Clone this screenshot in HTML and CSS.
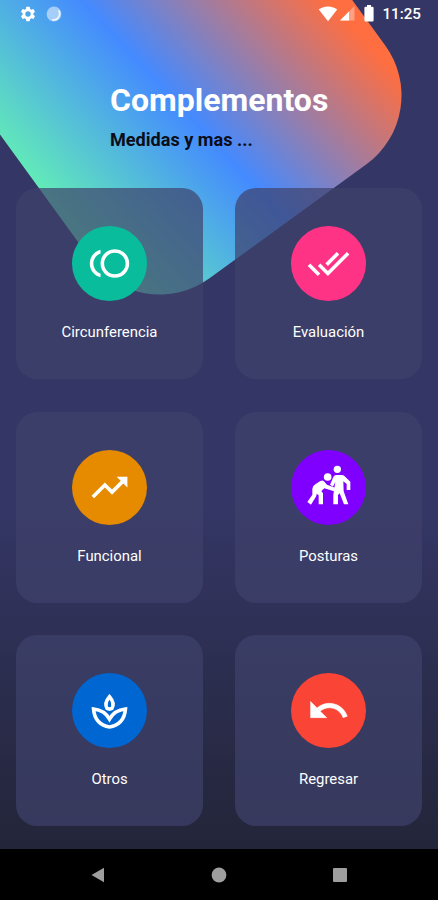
FILE: index.html
```html
<!DOCTYPE html>
<html lang="es">
<head>
	<meta charset="utf-8">
	<title>Complementos</title>
	<meta name="viewport" content="width=device-width, initial-scale=1">
	<link rel="stylesheet" href="styles.css">
</head>
<body>
	<div class="screen">
		<div class="shape"></div>

		<header class="status-bar">
			<div class="status-left">
				<svg width="18" height="18" viewBox="0 0 24 24"><path fill="#fff" d="M19.14 12.94c.04-.3.06-.61.06-.94s-.02-.64-.07-.94l2.03-1.58c.18-.14.23-.41.12-.61l-1.92-3.32c-.12-.22-.37-.29-.59-.22l-2.39.96c-.5-.38-1.03-.7-1.62-.94l-.36-2.54c-.04-.24-.24-.41-.48-.41h-3.84c-.24 0-.43.17-.47.41l-.36 2.54c-.59.24-1.13.57-1.62.94l-2.39-.96c-.22-.08-.47 0-.59.22L2.74 8.87c-.12.21-.08.47.12.61l2.03 1.58c-.05.3-.09.63-.09.94s.02.64.07.94l-2.03 1.58c-.18.14-.23.41-.12.61l1.92 3.32c.12.22.37.29.59.22l2.39-.96c.5.38 1.03.7 1.62.94l.36 2.54c.05.24.24.41.48.41h3.84c.24 0 .44-.17.47-.41l.36-2.54c.59-.24 1.13-.56 1.62-.94l2.39.96c.22.08.47 0 .59-.22l1.92-3.32c.12-.22.07-.47-.12-.61l-2.01-1.58zM12 15.6A3.6 3.6 0 1 1 12 8.4a3.6 3.6 0 0 1 0 7.2z"/></svg>
				<svg width="16" height="16" viewBox="0 0 16 16"><circle cx="8" cy="8" r="7.4" fill="#fff" opacity=".5"/><path d="M12.5 4.2A6.2 6.2 0 0 1 6.2 13.8" fill="none" stroke="#fff" stroke-width="1.5" opacity=".85"/></svg>
			</div>
			<div class="status-right">
				<svg class="wifi" width="20" height="16" viewBox="0 0 20 16"><path fill="#fff" d="M.8 3.6C6.3-.7 13.7-.7 19.2 3.6L10 15.2z"/></svg>
				<svg class="signal" width="15" height="15" viewBox="0 0 15 15"><path fill="#fff" opacity=".35" d="M0 14.5 14.5 0v14.5z"/><path fill="#fff" d="M0 14.5 9 5.5v9z"/></svg>
				<svg class="battery" width="10" height="17" viewBox="0 0 10 17"><path fill="#fff" d="M3 0h4v1.8h1.4q1.2 0 1.2 1.2v12.3q0 1.2-1.2 1.2H1.6q-1.2 0-1.2-1.2V3q0-1.2 1.2-1.2H3z"/></svg>
				<span class="clock">11:25</span>
			</div>
		</header>

		<div class="titles">
			<h1 class="title">Complementos</h1>
			<p class="subtitle">Medidas y mas ...</p>
		</div>

		<main class="cards">
			<div class="card">
				<div class="circle green">
					<svg class="icon" viewBox="0 0 24 24"><path d="M15 4c-4.42 0-8 3.58-8 8s3.58 8 8 8 8-3.58 8-8-3.58-8-8-8zm0 14c-3.31 0-6-2.69-6-6s2.69-6 6-6 6 2.69 6 6-2.69 6-6 6zM3 12c0-2.61 1.67-4.83 4-5.65V4.26C3.55 5.15 1 8.27 1 12s2.55 6.85 6 7.74v-2.09c-2.33-.82-4-3.04-4-5.65z"/></svg>
				</div>
				<span class="label">Circunferencia</span>
			</div>
			<div class="card">
				<div class="circle pink">
					<svg class="icon" viewBox="0 0 24 24"><path d="M18 7l-1.41-1.41-6.34 6.34 1.41 1.41L18 7zm4.24-1.41L11.66 16.17 7.48 12l-1.41 1.41L11.66 19l12-12-1.42-1.41zM.41 13.41L6 19l1.41-1.41L1.83 12 .41 13.41z"/></svg>
				</div>
				<span class="label">Evaluación</span>
			</div>
			<div class="card">
				<div class="circle orange">
					<svg class="icon" viewBox="0 0 24 24"><path d="M16 6l2.29 2.29-4.88 4.88-4-4L2 16.59 3.41 18l6-6 4 4 6.3-6.29L22 12V6z"/></svg>
				</div>
				<span class="label">Funcional</span>
			</div>
			<div class="card">
				<div class="circle purple">
					<svg class="people" viewBox="-1 0 150 150">
						<circle cx="99" cy="22" r="11"/>
						<circle cx="70" cy="45" r="11.5"/>
						<path d="M58 57 68 68 92 77 89 88 60 79 51 87 56 94V127H43V100L37 95 36 102 20 128 9 120 24 98V80Q25 71 34 66L48 57Q54 54 58 57z"/>
						<path d="M77 68 87 45Q90 39 96 39H112Q117 39 121 43L138 59V84H127V66L117 58 118 88 132 127H119L106 94 101 99V127H87V98L93 60 86 74z"/>
					</svg>
				</div>
				<span class="label">Posturas</span>
			</div>
			<div class="card">
				<div class="circle blue">
					<svg class="icon line" viewBox="0 0 24 24"><path d="M12 4.3C10 6.6 9.3 8.7 10.7 10.9L12 11.3 13.3 10.9C14.7 8.7 14 6.6 12 4.3z"/><path d="M3.1 11.2C3.5 17 7 20.6 12 21.2c5-.6 8.5-4.2 8.9-10C16.5 11.7 13.6 13.9 12 16.8 10.4 13.9 7.5 11.7 3.1 11.2z"/></svg>
				</div>
				<span class="label">Otros</span>
			</div>
			<div class="card">
				<div class="circle red">
					<svg class="icon undo" viewBox="0 0 24 24"><path d="M12.5 8c-2.65 0-5.05.99-6.9 2.6L2 7v9h9l-3.62-3.62c1.39-1.16 3.16-1.88 5.12-1.88 3.54 0 6.55 2.31 7.6 5.5l2.37-.78C21.08 11.03 17.15 8 12.5 8z"/></svg>
				</div>
				<span class="label">Regresar</span>
			</div>
		</main>
	</div>

	<nav class="nav-bar">
		<svg width="14" height="16" viewBox="0 0 14 16"><path fill="#9e9e9e" d="M.5 8 13 .8v14.4z"/></svg>
		<svg width="16" height="16" viewBox="0 0 16 16"><circle cx="8" cy="8" r="7.4" fill="#9e9e9e"/></svg>
		<svg width="14" height="14" viewBox="0 0 14 14"><rect width="14" height="14" rx="1" fill="#9e9e9e"/></svg>
	</nav>
</body>
</html>
```
FILE: styles.css
```css
* {
  box-sizing: border-box;
}
body {
  margin: 0;
  height: 900px;
  display: flex;
  flex-direction: column;
  background: #000;
  font-family: Roboto, sans-serif;
  color: #fff;
}
svg {
  display: block;
}
.screen {
  position: relative;
  height: 849px;
  overflow: hidden;
  background: linear-gradient(to bottom, #343665 0%, #343665 60%, #232539 100%);
}

/* Big rotated square behind the title */
.shape {
  position: absolute;
  left: -1px;
  top: -108px;
  width: 364px;
  height: 364px;
  border-radius: 85px;
  transform: rotate(-36deg);
  background: linear-gradient(83deg, #64f0b4 3%, #448aff 44.5%, #ff6e40 89%);
}

.status-bar {
  position: relative;
  height: 28px;
  padding: 0 17px 0 19px;
  display: flex;
  justify-content: space-between;
  align-items: center;
}
.status-left,
.status-right {
  display: flex;
  align-items: center;
}
.status-left {
  gap: 9px;
}
.signal {
  margin-left: 2px;
}
.battery {
  margin-left: 9px;
}
.clock {
  margin-left: 8px;
  font-size: 15.2px;
  font-weight: 500;
  line-height: 28px;
}
.wifi,
.signal,
.battery {
  margin-bottom: 1px;
}

.titles {
  position: relative;
  height: 160px;
  padding: 53px 0 0 110px;
}
.title {
  margin: 0;
  font-size: 32px;
  font-weight: bold;
  line-height: 38px;
}
.subtitle {
  margin: 10px 0 0;
  font-size: 18.1px;
  font-weight: bold;
  line-height: 22px;
  color: #0b0d18;
}

.cards {
  position: relative;
  display: grid;
  grid-template-columns: 1fr 1fr;
  grid-auto-rows: 191px;
  gap: 32.5px 32px;
  padding: 0 16px;
}
.card {
  display: flex;
  flex-direction: column;
  align-items: center;
  padding-top: 38px;
  border-radius: 21px;
  background: rgba(62, 66, 107, 0.7);
}
.circle {
  width: 75px;
  height: 75px;
  border-radius: 50%;
  display: flex;
  justify-content: center;
  align-items: center;
}
.green { background: #09bc9c; }
.pink { background: #ff3385; }
.orange { background: #e68a00; }
.purple { background: #8000ff; }
.blue { background: #0066d1; }
.red { background: #f94436; }

.icon {
  width: 43px;
  height: 43px;
  fill: #fff;
}
.people {
  width: 50px;
  height: 50px;
  fill: #fff;
}
.line {
  fill: none;
  stroke: #fff;
  stroke-width: 2;
}
.undo {
  stroke: #fff;
  stroke-width: 0.3;
}
.label {
  margin-top: 22px;
  font-size: 14.9px;
  line-height: 19px;
}

.nav-bar {
  height: 51px;
  padding: 0 91px;
  display: flex;
  justify-content: space-between;
  align-items: center;
}
```
